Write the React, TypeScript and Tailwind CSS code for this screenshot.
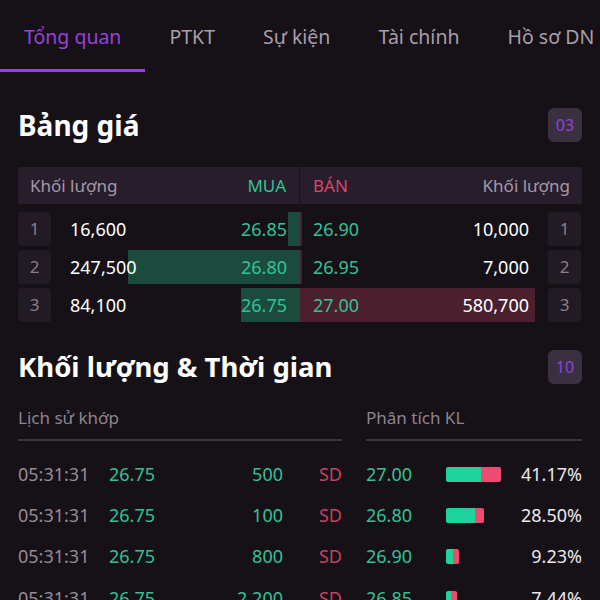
import React from "react";

const tabs = ["Tổng quan", "PTKT", "Sự kiện", "Tài chính", "Hồ sơ DN"];

const book = [
  { i: 1, bidVol: "16,600", bid: "26.85", bidBar: 12, ask: "26.90", askVol: "10,000", askBar: 2 },
  { i: 2, bidVol: "247,500", bid: "26.80", bidBar: 172, ask: "26.95", askVol: "7,000", askBar: 2 },
  { i: 3, bidVol: "84,100", bid: "26.75", bidBar: 59, ask: "27.00", askVol: "580,700", askBar: 235 },
];

const trades = [
  { t: "05:31:31", p: "26.75", v: "500" },
  { t: "05:31:31", p: "26.75", v: "100" },
  { t: "05:31:31", p: "26.75", v: "800" },
  { t: "05:31:31", p: "26.75", v: "2,200" },
];

const volumes = [
  { p: "27.00", g: 35, r: 20, pct: "41.17%" },
  { p: "26.80", g: 29, r: 9, pct: "28.50%" },
  { p: "26.90", g: 7, r: 6, pct: "9.23%" },
  { p: "26.85", g: 5, r: 6, pct: "7.44%" },
];

const font = { fontFamily: "'Noto Sans', Lato, sans-serif" };

function Badge({ n }: { n: string }) {
  return (
    <div className="w-[34px] h-[34px] rounded-md bg-[#3a3040] text-[#8f44d8] text-[16px] flex items-center justify-center">
      {n}
    </div>
  );
}

function IndexBox({ n }: { n: number }) {
  return (
    <div className="w-[33px] h-[34px] shrink-0 rounded-[4px] bg-[#221a25] text-[#8a7f8c] text-[17px] flex items-center justify-center">
      {n}
    </div>
  );
}

export default function App() {
  return (
    <div className="w-[600px] h-[600px] overflow-hidden bg-[#151116] text-[#ece8ec]" style={font}>
      {/* Tabs */}
      <div className="flex h-[72px] whitespace-nowrap">
        {tabs.map((t, i) => (
          <div
            key={t}
            className={`px-6 pt-1 flex items-center text-[19.5px] border-b-[3px] ${
              i === 0 ? "text-[#9b40dc] border-[#9b40dc]" : "text-[#aa9eab] border-transparent"
            }`}
          >
            {t}
          </div>
        ))}
      </div>

      {/* Bảng giá */}
      <div className="px-[18px] pt-9">
        <div className="flex items-center justify-between h-[34px]">
          <h2 className="text-[28px] font-bold text-white">Bảng giá</h2>
          <Badge n="03" />
        </div>

        <div className="mt-[25px] h-[37px] flex bg-[#281e2b] text-[17px]">
          <div className="w-[282px] flex items-center justify-between pl-3 pr-[13px] border-r border-[#1a141c]">
            <span className="text-[#a797a9]">Khối lượng</span>
            <span className="text-[#33c195]">MUA</span>
          </div>
          <div className="flex-1 flex items-center justify-between pl-[13px] pr-3">
            <span className="text-[#d8456d]">BÁN</span>
            <span className="text-[#a797a9]">Khối lượng</span>
          </div>
        </div>

        <div className="mt-2 flex flex-col gap-1 text-[18px]">
          {book.map((r) => (
            <div key={r.i} className="flex h-[34px]">
              <IndexBox n={r.i} />
              <div
                className="w-[249px] flex items-center justify-between pl-[19px] pr-[13px]"
                style={{ background: `linear-gradient(to left, #1b4b3d ${r.bidBar}px, transparent ${r.bidBar}px)` }}
              >
                <span className="text-white">{r.bidVol}</span>
                <span className="text-[#33c195]">{r.bid}</span>
              </div>
              <div
                className="w-[248px] flex items-center justify-between pl-[13px] pr-[19px]"
                style={{ background: `linear-gradient(to right, #4b1f2d ${r.askBar}px, transparent ${r.askBar}px)` }}
              >
                <span className="text-[#33c195]">{r.ask}</span>
                <span className="text-white">{r.askVol}</span>
              </div>
              <IndexBox n={r.i} />
            </div>
          ))}
        </div>

        {/* Khối lượng & Thời gian */}
        <div className="mt-7 flex items-center justify-between h-[34px]">
          <h2 className="text-[27.5px] font-bold text-white">Khối lượng &amp; Thời gian</h2>
          <Badge n="10" />
        </div>

        <div className="mt-[21px] flex gap-6">
          <div className="w-[324px]">
            <div className="text-[17px] text-[#8f8390] pb-[8px] border-b-2 border-[#3b343e]">Lịch sử khớp</div>
            <div className="mt-[13px] flex flex-col">
              {trades.map((r, i) => (
                <div key={i} className="h-[41.3px] flex items-center text-[18px]">
                  <span className="w-[91px] text-[#978b98]">{r.t}</span>
                  <span className="w-[66px] text-[#33c195]">{r.p}</span>
                  <span className="w-[108px] text-right text-[#33c195]">{r.v}</span>
                  <span className="ml-auto text-[#c8405f]">SD</span>
                </div>
              ))}
            </div>
          </div>
          <div className="flex-1">
            <div className="text-[17px] text-[#8f8390] pb-[8px] border-b-2 border-[#3b343e]">Phân tích KL</div>
            <div className="mt-[13px] flex flex-col">
              {volumes.map((r, i) => (
                <div key={i} className="h-[41.3px] flex items-center text-[18px]">
                  <span className="w-[80px] text-[#33c195]">{r.p}</span>
                  <div className="flex h-[15px] rounded-[2px] overflow-hidden">
                    <div className="bg-[#1fd49c]" style={{ width: r.g }} />
                    <div className="bg-[#ef4a72]" style={{ width: r.r }} />
                  </div>
                  <span className="ml-auto text-[#ece8ec]">{r.pct}</span>
                </div>
              ))}
            </div>
          </div>
        </div>
      </div>
    </div>
  );
}
